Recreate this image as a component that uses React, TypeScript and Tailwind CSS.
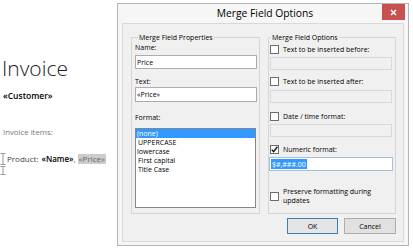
import React from "react";

const sans = "font-['Open_Sans',sans-serif]";

function Checkbox({ checked }: { checked?: boolean }) {
  return (
    <div className="w-[9px] h-[9px] border border-[#6d6d6d] bg-white flex items-center justify-center shrink-0">
      {checked && (
        <svg width="7" height="7" viewBox="0 0 7 7">
          <path d="M0.7 3.6 L2.6 5.7 L6.4 0.8" stroke="#111" strokeWidth="1.4" fill="none" />
        </svg>
      )}
    </div>
  );
}

function IBeam({ h = 12 }: { h?: number }) {
  return (
    <svg width="6" height={h} viewBox={`0 0 6 ${h}`} className="shrink-0">
      <path d={`M0.5 0.5 H5.5 M3 0.5 V${h - 0.5} M0.5 ${h - 0.5} H5.5`} stroke="#9a9a9a" strokeWidth="1" fill="none" />
    </svg>
  );
}

export default function App() {
  return (
    <div className={`w-[413px] h-[249px] bg-white overflow-hidden flex ${sans}`}>
      {/* Document */}
      <div className="w-[117px] shrink-0 flex flex-col pt-[56px]">
        <div className="text-[21px] leading-[24px] font-light text-[#222] pl-[2px]">Invoice</div>
        <div className="mt-[11px] text-[8.5px] leading-[10px] font-semibold text-black pl-[3px]">«Customer»</div>
        <div className="mt-[26px] text-[7.8px] leading-[10px] text-[#777] pl-[3px]">Invoice items:</div>
        <div className="mt-[16px] h-[12px] flex items-center text-[8px] leading-[10px] text-[#444]">
          <IBeam h={12} />
          <span className="ml-[1px]">Product:</span>
          <span className="ml-[3px] font-semibold text-black">«Name»</span>
          <span>,</span>
          <span className="ml-[2px] bg-[#cccccc] text-[#666] h-[10px] flex items-center px-[1px]">«Price»</span>
        </div>
        <div className="mt-[1px]">
          <IBeam h={9} />
        </div>
      </div>

      {/* Dialog window */}
      <div className="relative mt-[3px] w-[292px] h-[243px] border border-[#b5b5b5] bg-[#f6f6f6] flex flex-col shrink-0">
        <div className="h-[19px] flex items-center justify-center text-[10.3px] text-black pl-[4px]">
          Merge Field Options
        </div>
        <div className="absolute top-0 right-[3px] w-[23px] h-[16px] bg-[#c75050] flex items-center justify-center">
          <svg width="7" height="7" viewBox="0 0 7 7">
            <path d="M1 1 L6 6 M6 1 L1 6" stroke="#fff" strokeWidth="1.6" />
          </svg>
        </div>
        <div className="mx-[4px] w-[282px] h-[219px] border border-[#d9d9d9] bg-[#f0f0f0] flex flex-col pl-[8px] pt-[13px] text-[7px] leading-[9px] text-black">
          <div className="flex gap-[8px]">
            {/* Left group */}
            <div className="relative w-[129px] h-[177px] border border-[#d5d5d5] flex flex-col pl-[3px]">
              <span className="absolute left-[6px] top-[-5px] px-[1px] bg-[#f0f0f0] leading-[9px]">Merge Field Properties</span>
              <div className="mt-[5px] h-[9px]">Name:</div>
              <div className="mt-[3px] w-[122px] h-[14px] border border-[#abadb3] bg-white flex items-center pl-[1px]">Price</div>
              <div className="mt-[8px] h-[9px]">Text:</div>
              <div className="mt-[1px] w-[122px] h-[15px] border border-[#abadb3] bg-white flex items-center pl-[1px]">«Price»</div>
              <div className="mt-[11px] h-[9px]">Format:</div>
              <div className="mt-[6px] w-[121px] h-[80px] border border-[#828790] bg-white flex flex-col">
                <div className="h-[9px] bg-[#3399ff] text-white pl-[1px] flex items-center">(none)</div>
                <div className="h-[9px] pl-[2px] flex items-center">UPPERCASE</div>
                <div className="h-[9px] pl-[1px] flex items-center">lowercase</div>
                <div className="h-[9px] pl-[2px] flex items-center">First capital</div>
                <div className="h-[9px] pl-[2px] flex items-center">Title Case</div>
              </div>
            </div>
            {/* Right group */}
            <div className="relative w-[128px] h-[177px] border border-[#d5d5d5] flex flex-col pl-[1px]">
              <span className="absolute left-[2px] top-[-5px] px-[1px] bg-[#f0f0f0] leading-[9px]">Merge Field Options</span>
              <div className="mt-[7px] h-[9px] flex items-center gap-[4px]">
                <Checkbox />
                <span>Text to be inserted before:</span>
              </div>
              <div className="mt-[3px] w-[122px] h-[13px] border border-[#d9d9d9] bg-[#f0f0f0]" />
              <div className="mt-[7px] h-[9px] flex items-center gap-[4px]">
                <Checkbox />
                <span>Text to be inserted after:</span>
              </div>
              <div className="mt-[4px] w-[122px] h-[13px] border border-[#d9d9d9] bg-[#f0f0f0]" />
              <div className="mt-[9px] h-[9px] flex items-center gap-[4px]">
                <Checkbox />
                <span>Date / time format:</span>
              </div>
              <div className="mt-[3px] w-[122px] h-[13px] border border-[#d9d9d9] bg-[#f0f0f0]" />
              <div className="mt-[8px] h-[9px] flex items-center gap-[4px]">
                <Checkbox checked />
                <span>Numeric format:</span>
              </div>
              <div className="mt-[3px] -ml-[1px] w-[124px] h-[14px] border border-[#a9c0da] bg-white flex items-center pl-[1px]">
                <span className="bg-[#3399ff] text-white h-[10px] flex items-center px-[1px]">$#,###.00</span>
              </div>
              <div className="mt-[16px] h-[18px] flex items-center gap-[4px]">
                <Checkbox />
                <span className="leading-[9px]">
                  Preserve formatting during
                  <br />
                  updates
                </span>
              </div>
            </div>
          </div>
          <div className="mt-[4px] flex justify-end pr-[7px] gap-[6px]">
            <div className="w-[51px] h-[16px] border border-[#3c7fb1] bg-[#e5e5e5] flex items-center justify-center">OK</div>
            <div className="w-[52px] h-[16px] border border-[#adadad] bg-[#e1e1e1] flex items-center justify-center">Cancel</div>
          </div>
        </div>
      </div>
    </div>
  );
}
